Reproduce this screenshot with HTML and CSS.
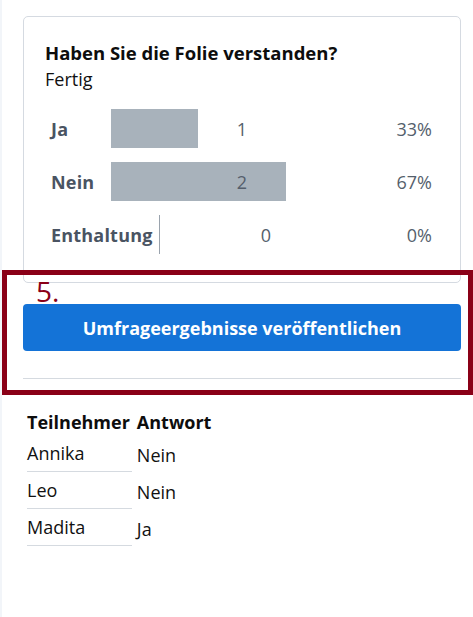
FILE: index.html
```html
<!DOCTYPE html>
<html lang="de">
<head>
<meta charset="utf-8">
<title>Umfrage</title>
<link rel="stylesheet" href="styles.css">
</head>
<body>
<div class="page">
  <section class="card">
    <h2 class="title">Haben Sie die Folie verstanden?</h2>
    <div class="status">Fertig</div>
    <div class="results">
      <div class="row">
        <span class="label">Ja</span>
        <span class="track"><span class="bar" style="width:33.3%"></span><span class="count">1</span></span>
        <span class="pct">33%</span>
      </div>
      <div class="row">
        <span class="label">Nein</span>
        <span class="track"><span class="bar" style="width:66.7%"></span><span class="count">2</span></span>
        <span class="pct">67%</span>
      </div>
      <div class="row">
        <span class="label">Enthaltung</span>
        <span class="track"><span class="bar bar-empty"></span><span class="count">0</span></span>
        <span class="pct">0%</span>
      </div>
    </div>
  </section>
  <button class="publish" type="button">Umfrageergebnisse veröffentlichen</button>
  <hr class="sep">
  <table class="answers">
    <thead>
      <tr><th class="c1">Teilnehmer</th><th class="c2">Antwort</th></tr>
    </thead>
    <tbody>
      <tr><td class="c1">Annika</td><td class="c2">Nein</td></tr>
      <tr><td class="c1">Leo</td><td class="c2">Nein</td></tr>
      <tr><td class="c1">Madita</td><td class="c2">Ja</td></tr>
    </tbody>
  </table>
  <div class="highlight"><span class="step">5.</span></div>
</div>
</body>
</html>
```
FILE: styles.css
```css
html, body {
  margin: 0;
  padding: 0;
  background: #ffffff;
}
body {
  font-family: "Open Sans", "Noto Sans", "Liberation Sans", sans-serif;
  font-size: 18px;
  color: #111;
}
.page {
  position: relative;
  min-height: 617px;
  box-sizing: border-box;
  border-left: 2px solid #f2f5f9;
  padding: 16px 12px 0 21px;
}
.card {
  border: 1px solid #d5dae1;
  border-radius: 5px;
  padding: 22px 28px 28px 21px;
}
.title {
  margin: 0;
  font-size: 18.5px;
  font-weight: 700;
  line-height: 27px;
  color: #0d0d0d;
}
.status {
  line-height: 26px;
  color: #111;
}
.results {
  margin-top: 17px;
  display: flex;
  flex-direction: column;
  gap: 14px;
  padding-left: 6px;
}
.row {
  display: flex;
  align-items: stretch;
  height: 39px;
}
.label {
  min-width: 54px;
  padding-right: 6px;
  font-weight: 700;
  color: #4a5462;
  letter-spacing: 0.2px;
  display: flex;
  align-items: center;
}
.track {
  flex: 1;
  position: relative;
  display: flex;
  align-items: center;
  justify-content: center;
}
.bar {
  position: absolute;
  left: 0;
  top: 0;
  bottom: 0;
  background: #a8b2bb;
}
.bar-empty {
  width: 1px;
  background: #9aa3ad;
}
.count {
  position: relative;
  color: #555f6c;
}
.pct {
  width: 59px;
  color: #555f6c;
  display: flex;
  align-items: center;
  justify-content: flex-end;
}
.publish {
  display: block;
  width: 100%;
  height: 47px;
  margin-top: 21px;
  border: 0;
  border-radius: 4px;
  background: #1473d7;
  color: #fff;
  font-family: inherit;
  font-size: 18px;
  font-weight: 700;
}
.sep {
  margin: 27px 0 0;
  border: 0;
  border-top: 1px solid #d5dae0;
}
.answers {
  margin: 31px 0 0 4px;
  border-collapse: collapse;
}
.answers th {
  text-align: left;
  font-weight: 700;
  line-height: 24px;
  padding: 0 0 1px;
  color: #0d0d0d;
}
.answers td {
  line-height: 24px;
  padding: 6px 0 6px;
  color: #111;
}
.answers .c1 {
  padding-right: 2px;
}
.answers .c2 {
  padding-left: 5px;
}
.answers td.c1 {
  border-bottom: 1px solid #d5dae0;
}
.answers td.c2 {
  padding-top: 8px;
  padding-bottom: 4px;
}
.highlight {
  position: absolute;
  left: 0;
  top: 270px;
  width: 471px;
  height: 125px;
  box-sizing: border-box;
  border: 5px solid #8a0017;
}
.step {
  position: absolute;
  left: 29px;
  top: 0;
  font-size: 28px;
  line-height: 32px;
  color: #8a0017;
}
```
